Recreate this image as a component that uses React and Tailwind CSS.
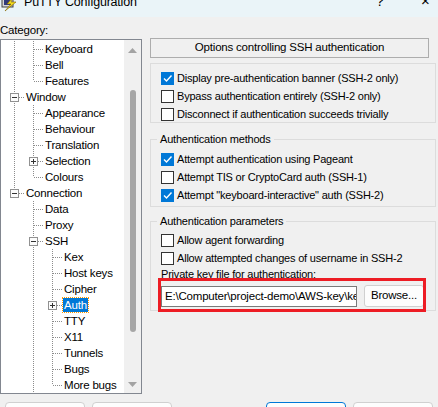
import React from "react";

const FONT = { fontFamily: '"Liberation Sans", Arial, sans-serif', letterSpacing: "-0.2px" };

// cols: ancestor columns (true = a vertical line passes through), last: last sibling
const TREE = [
  { label: "Keyboard", cols: [true], last: false },
  { label: "Bell", cols: [true], last: false },
  { label: "Features", cols: [true], last: true },
  { label: "Window", cols: [], last: false, box: "-" },
  { label: "Appearance", cols: [true], last: false },
  { label: "Behaviour", cols: [true], last: false },
  { label: "Translation", cols: [true], last: false },
  { label: "Selection", cols: [true], last: false, box: "+" },
  { label: "Colours", cols: [true], last: true },
  { label: "Connection", cols: [], last: true, box: "-" },
  { label: "Data", cols: [false], last: false },
  { label: "Proxy", cols: [false], last: false },
  { label: "SSH", cols: [false], last: false, box: "-" },
  { label: "Kex", cols: [false, true], last: false },
  { label: "Host keys", cols: [false, true], last: false },
  { label: "Cipher", cols: [false, true], last: false },
  { label: "Auth", cols: [false, true], last: false, box: "+", selected: true },
  { label: "TTY", cols: [false, true], last: false },
  { label: "X11", cols: [false, true], last: false },
  { label: "Tunnels", cols: [false, true], last: false },
  { label: "Bugs", cols: [false, true], last: false },
  { label: "More bugs", cols: [false, true], last: true },
];

const DOT = "#8c8c8c";

const Cell = ({ line, connector, last, box }) => (
  <svg width="19" height="16" className="shrink-0">
    {line && <line x1="9.5" y1="0" x2="9.5" y2="16" stroke={DOT} strokeDasharray="1 1" />}
    {connector && (
      <>
        <line x1="9.5" y1="0" x2="9.5" y2={last ? 8 : 16} stroke={DOT} strokeDasharray="1 1" />
        <line x1="10" y1="8.5" x2="19" y2="8.5" stroke={DOT} strokeDasharray="1 1" />
      </>
    )}
    {box && (
      <>
        <rect x="5.5" y="4.5" width="8" height="8" fill="#fcfcfc" stroke="#919191" />
        <line x1="7" y1="8.5" x2="12" y2="8.5" stroke="#333" />
        {box === "+" && <line x1="9.5" y1="6" x2="9.5" y2="11" stroke="#333" />}
      </>
    )}
  </svg>
);

const Check = ({ on }) =>
  on ? (
    <span className="w-[13px] h-[13px] bg-[#0078d7] flex items-center justify-center shrink-0">
      <svg width="11" height="11" viewBox="0 0 11 11">
        <path d="M2 5.5 L4.5 8 L9.5 2.5" fill="none" stroke="#fff" strokeWidth="1.4" />
      </svg>
    </span>
  ) : (
    <span className="w-[13px] h-[13px] bg-white border border-[#333] shrink-0" />
  );

const CheckRow = ({ on, children }) => (
  <div className="flex items-center gap-[3px] h-[18px] text-[11px] text-black">
    <Check on={on} />
    <span>{children}</span>
  </div>
);

const Group = ({ title, className, children }) => (
  <div className={`relative border border-[#dcdcdc] ${className}`}>
    {title && (
      <span className="absolute -top-[9px] left-[6px] bg-[#f0f0f0] px-[3px] text-[11px] leading-[16px]">
        {title}
      </span>
    )}
    {children}
  </div>
);

const Btn = ({ primary, className }) => (
  <div
    className={`h-[24px] w-[80px] rounded-[4px] bg-[#fdfdfd] border ${
      primary ? "border-[#0078d7]" : "border-[#d0d0d0]"
    } ${className}`}
  />
);

export default function App() {
  return (
    <div className="w-[438px] h-[407px] bg-[#f0f0f0] overflow-hidden text-black" style={FONT}>
      {/* title bar */}
      <div className="h-[17px] bg-[#eaf4f8] relative overflow-hidden">
        <svg width="16" height="16" className="absolute left-[1px] -top-[4px]" viewBox="0 0 16 16">
          <rect x="1" y="2" width="11" height="9" fill="#d8d8d8" stroke="#404040" />
          <rect x="3" y="4" width="7" height="5" fill="#303a7a" />
          <path d="M13 0 L6 8 L10 8 L4 15 L15 6 L10 6 Z" fill="#f5e020" stroke="#806000" strokeWidth="0.6" />
        </svg>
        <span className="absolute left-[24px] -top-[6px] text-[12.5px] leading-[16px]">PuTTY Configuration</span>
        <span className="absolute left-[376px] -top-[7px] text-[14px] leading-[16px]">?</span>
        <span className="absolute left-[421px] -top-[7px] text-[15px] leading-[16px]">×</span>
      </div>

      <div className="text-[11.5px] leading-[16px] mt-[5px]">Category:</div>

      <div className="flex mt-[1px]">
        {/* tree */}
        <div className="w-[142px] h-[355px] border border-[#828790] bg-white flex overflow-hidden shrink-0">
          <div className="flex-1 pl-[4px] pt-[1px]">
            {TREE.map((r) => (
              <div key={r.label} className="flex h-[16px] items-center">
                {r.cols.map((c, i) => (
                  <Cell key={i} line={c} />
                ))}
                <Cell connector last={r.last} box={r.box} />
                <span
                  className={`ml-[1px] text-[11.5px] leading-[14px] whitespace-nowrap px-[1px] ${
                    r.selected
                      ? "bg-[#0078d7] text-white outline outline-1 outline-dotted outline-[#ff9900]"
                      : ""
                  }`}
                >
                  {r.label}
                </span>
              </div>
            ))}
          </div>
          <div className="w-[17px] bg-[#f0f0f0] flex flex-col items-center">
            <svg width="9" height="6" className="mt-[7px]" viewBox="0 0 9 6">
              <path d="M0 6 L4.5 1 L9 6 Z" fill="#a3a3a3" />
            </svg>
            <div className="w-[6px] h-[242px] rounded-full bg-[#a6a6a6] mt-[37px]" />
            <div className="flex-1" />
            <svg width="9" height="6" className="mb-[5px]" viewBox="0 0 9 6">
              <path d="M0 0 L4.5 5 L9 0 Z" fill="#a3a3a3" />
            </svg>
          </div>
        </div>

        {/* options */}
        <div className="ml-[8px] flex-1 flex flex-col -mt-[1px]">
          <div className="w-[279px] h-[20px] border border-[#adadad] flex items-center justify-center text-[11.5px]">
            Options controlling SSH authentication
          </div>

          <Group className="mt-[5px] w-[286px] h-[60px] pl-[10px] pt-[5px]">
            <CheckRow on>Display pre-authentication banner (SSH-2 only)</CheckRow>
            <CheckRow>Bypass authentication entirely (SSH-2 only)</CheckRow>
            <CheckRow>Disconnect if authentication succeeds trivially</CheckRow>
          </Group>

          <Group title="Authentication methods" className="mt-[16px] w-[286px] h-[68px] pl-[10px] pt-[10px]">
            <CheckRow on>Attempt authentication using Pageant</CheckRow>
            <CheckRow>Attempt TIS or CryptoCard auth (SSH-1)</CheckRow>
            <CheckRow on>Attempt "keyboard-interactive" auth (SSH-2)</CheckRow>
          </Group>

          <Group title="Authentication parameters" className="mt-[14px] w-[286px] h-[90px] pl-[10px] pt-[9px]">
            <CheckRow>Allow agent forwarding</CheckRow>
            <CheckRow>Allow attempted changes of username in SSH-2</CheckRow>
            <div className="text-[11px] leading-[16px] -mt-[1px]">Private key file for authentication:</div>
            <div className="relative flex items-center gap-[7px] mt-[3px]">
              <div className="w-[196px] h-[21px] bg-white border border-[#7a7a7a] overflow-hidden whitespace-nowrap text-[11.5px] leading-[19px] pl-[3px]">
                E:\Computer\project-demo\AWS-key\key.ppk
              </div>
              <div className="w-[60px] h-[22px] bg-[#fdfdfd] border border-[#d0d0d0] rounded-[3px] flex items-center justify-center text-[11.5px]">
                Browse...
              </div>
              {/* red annotation */}
              <div className="absolute -left-[3px] -top-[7px] w-[268px] h-[34px] border-[3px] border-[#ed1c24]" />
            </div>
          </Group>
        </div>
      </div>

      {/* bottom buttons */}
      <div className="flex mt-[8px] pl-[5px]">
        <Btn />
        <Btn className="ml-[7px]" />
        <Btn primary className="ml-[94px]" />
        <Btn className="ml-[7px]" />
      </div>
    </div>
  );
}
